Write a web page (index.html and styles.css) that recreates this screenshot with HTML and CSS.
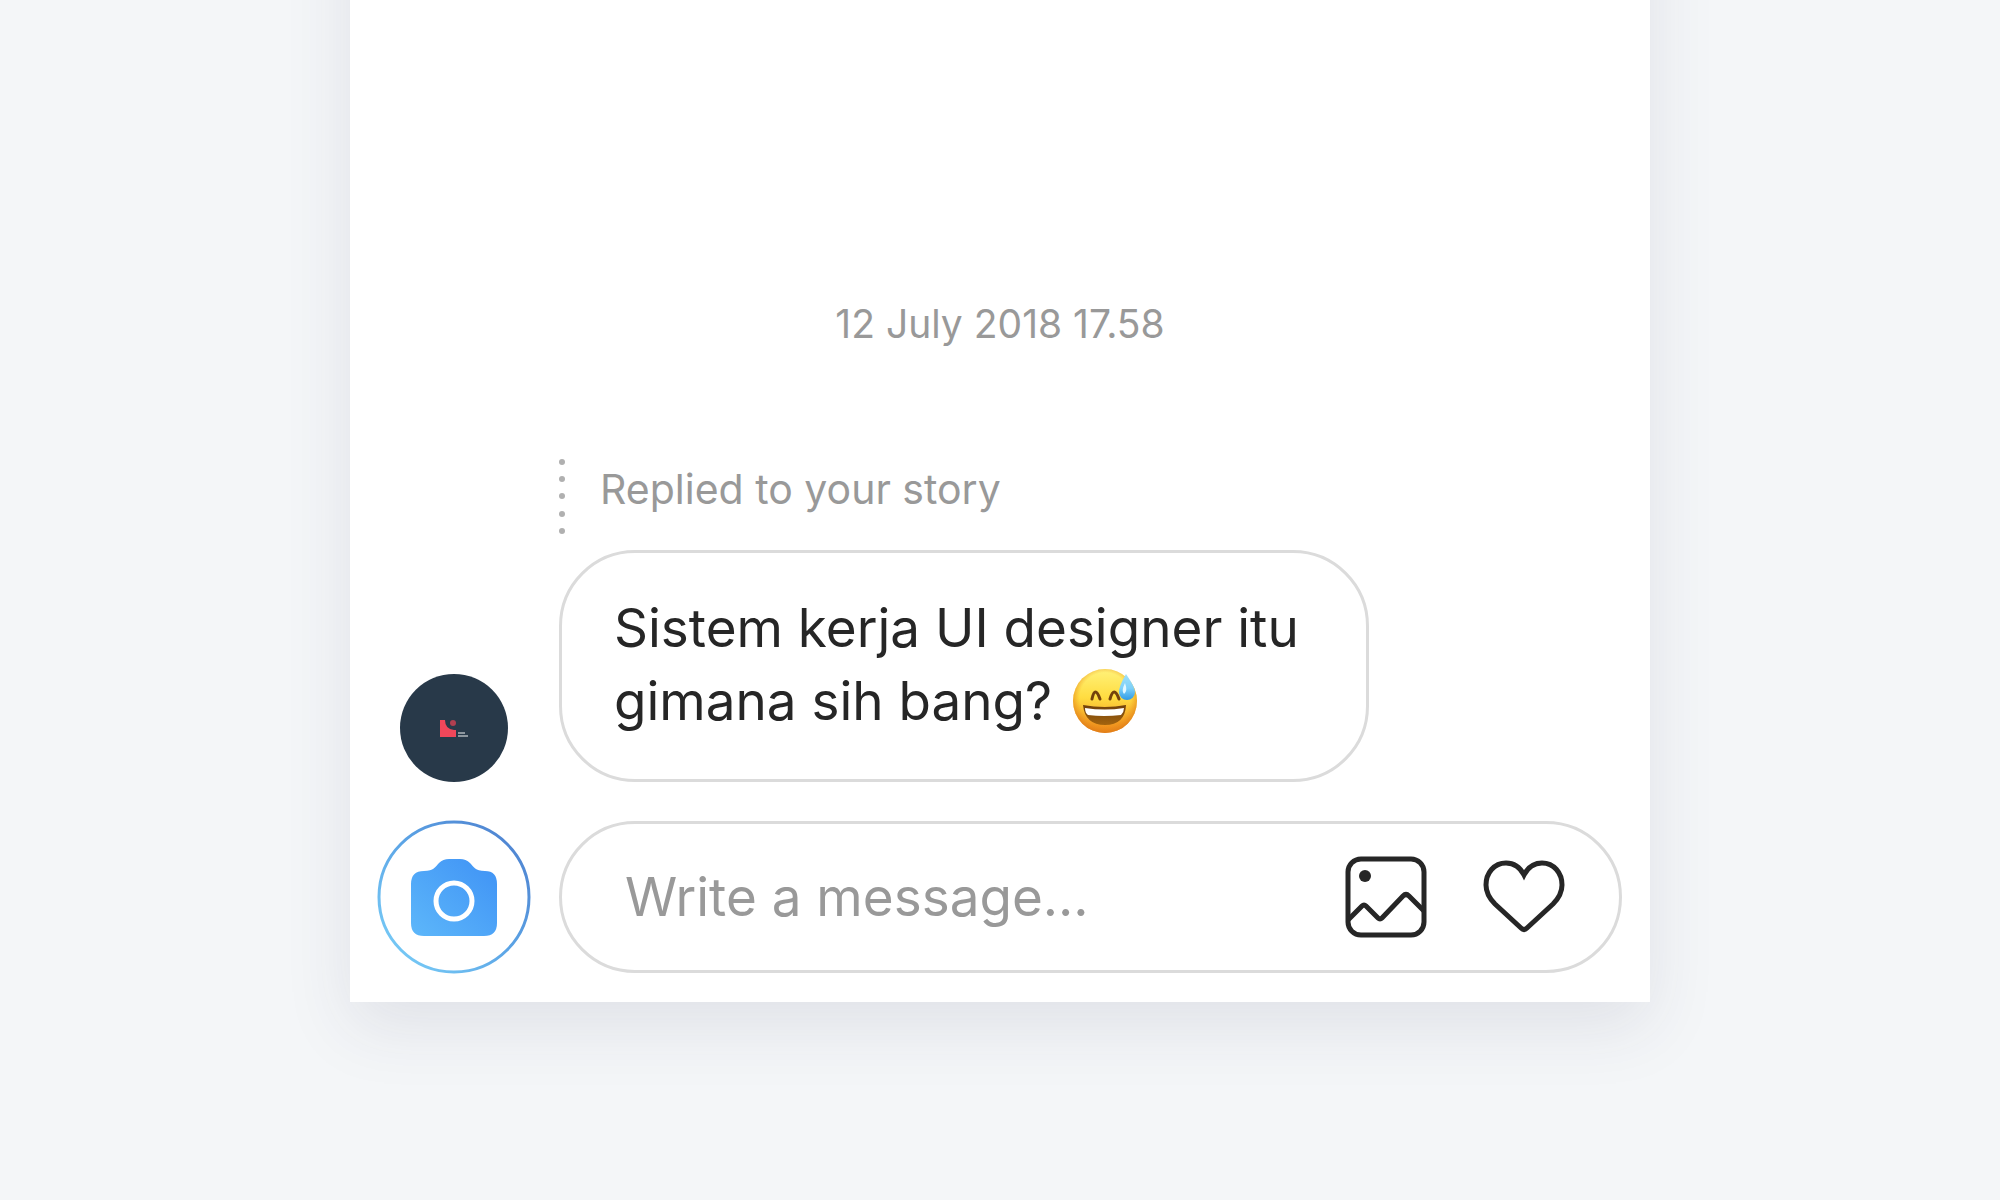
FILE: index.html
```html
<!DOCTYPE html>
<html lang="id">
<head>
<meta charset="utf-8">
<meta name="viewport" content="width=device-width, initial-scale=1">
<title>Direct message</title>
<link rel="stylesheet" href="styles.css">
</head>
<body>
<main class="chat">
  <time class="chat-date" datetime="2018-07-12T17:58">12 July 2018 17.58</time>

  <section class="thread">
    <div class="reply-note">
      <svg class="reply-dots" viewBox="0 0 6 76" aria-hidden="true">
        <circle cx="3" cy="4" r="3"/><circle cx="3" cy="21" r="3"/><circle cx="3" cy="38" r="3"/><circle cx="3" cy="56" r="3"/><circle cx="3" cy="73" r="3"/>
      </svg>
      <span>Replied to your story</span>
    </div>
    <svg class="avatar" viewBox="0 0 108 108" role="img" aria-label="Sender">
      <circle cx="54" cy="54" r="54" fill="#283949"/>
      <path d="M40 46h5q0 9 9 10h2v7H40z" fill="#f0475a"/>
      <circle cx="53" cy="49" r="3" fill="#b03f50"/>
      <path d="M58 59h7M58 62h10" stroke="#8d969e" stroke-width="2"/>
    </svg>
    <p class="bubble">Sistem kerja UI designer itu gimana sih bang? <svg class="emoji" viewBox="0 0 64 64" role="img" aria-label="Grinning face with sweat">
      <defs>
        <linearGradient id="face" x1="0" y1="0" x2="0" y2="1"><stop offset="0" stop-color="#fff27a"/><stop offset=".45" stop-color="#ffdc40"/><stop offset="1" stop-color="#ee8418"/></linearGradient>
        <radialGradient id="rim" cx=".5" cy=".45" r=".56"><stop offset=".7" stop-color="#f0961b" stop-opacity="0"/><stop offset="1" stop-color="#dd7a18" stop-opacity=".9"/></radialGradient>
        <linearGradient id="drop" x1="0" y1="0" x2="0" y2="1"><stop offset="0" stop-color="#9fe0f8"/><stop offset=".55" stop-color="#7dd0f8"/><stop offset="1" stop-color="#2f9ae6"/></linearGradient>
        <linearGradient id="mouth" x1="0" y1="0" x2="0" y2="1"><stop offset="0" stop-color="#70400c"/><stop offset="1" stop-color="#a3640e"/></linearGradient>
      </defs>
      <circle cx="32" cy="32" r="32" fill="url(#face)"/>
      <circle cx="32" cy="32" r="32" fill="url(#rim)"/>
      <path d="M19 30q3-14 8 0M37 30q4-14 9 0" fill="none" stroke="#74420c" stroke-width="3" stroke-linecap="round"/>
      <path d="M10 36q22 4 43 0q-1 20-21 20T10 36z" fill="url(#mouth)"/>
      <path d="M12 39q20 3 39 0q0 4-3 7q-17 2-33 0q-3-2-3-7z" fill="#fff"/>
      <path d="M53 5q9 13 9 18a8 8 0 0 1-16 0q0-6 7-18z" fill="url(#drop)"/>
      <path d="M52 14q-4 8-1 11q4-3 1-11z" fill="#e2f7ff"/>
    </svg></p>
  </section>

  <form class="composer">
    <button class="camera" type="button" aria-label="Open camera">
      <svg viewBox="0 0 152 152" aria-hidden="true">
        <defs>
          <linearGradient id="ring" x1="0" y1="1" x2="1" y2="0"><stop offset="0" stop-color="#7dd3fa"/><stop offset=".5" stop-color="#5ca5e6"/><stop offset="1" stop-color="#4c7ccc"/></linearGradient>
          <linearGradient id="body" x1="0" y1="1" x2="1" y2="0"><stop offset="0" stop-color="#5db7fa"/><stop offset="1" stop-color="#3f92f5"/></linearGradient>
        </defs>
        <circle cx="76" cy="76" r="75" fill="none" stroke="url(#ring)" stroke-width="3"/>
        <path d="M46 50C56 50 57 46 61 42Q65 38 71 38H82Q88 38 92 42C96 46 97 50 107 50Q119 50 119 63V102Q119 115 106 115H46Q33 115 33 102V63Q33 50 46 50z" fill="url(#body)"/>
        <circle cx="76" cy="80" r="18" fill="none" stroke="#fff" stroke-width="5"/>
      </svg>
    </button>
    <div class="field">
      <input class="message" type="text" placeholder="Write a message..." aria-label="Write a message">
      <button class="tool" type="button" aria-label="Send a photo">
        <svg viewBox="0 0 82 82" aria-hidden="true">
          <rect x="3" y="3" width="76" height="76" rx="13"/>
          <path d="M3 64L17 50Q19 48 21 50L33 62Q35 64 37 62L58 40Q61 37 64 40L79 55"/>
          <circle class="solid" cx="20" cy="20" r="6"/>
        </svg>
      </button>
      <button class="tool" type="button" aria-label="Send a like">
        <svg viewBox="0 0 82 82" aria-hidden="true">
          <path d="M41 19C37 11 31 7 23 7C11 7 3 17 3 29C3 37 7 43 12 48L38 72Q41 75 44 72L70 48C75 43 79 37 79 29C79 17 71 7 59 7C51 7 45 11 41 19z"/>
        </svg>
      </button>
    </div>
  </form>
</main>
</body>
</html>
```
FILE: styles.css
```css
* {
  box-sizing: border-box;
}

html {
  background: #f4f6f8;
}

body {
  display: flow-root;
  min-height: 100vh;
  margin: 0;
  color: #262626;
  font-family: Inter, "Liberation Sans", sans-serif;
}

/* The card starts above the window, so its top shadow edge never shows. */
.chat {
  max-width: 1300px;
  margin: -100px auto 0;
  padding: 404px 28px 29px;
  background: #fff;
  box-shadow: 0 24px 64px rgba(50, 50, 93, 0.1);
}

.chat-date {
  display: block;
  color: #999;
  font-size: 39px;
  line-height: 40px;
  text-align: center;
}

.thread,
.composer {
  display: grid;
  grid-template-columns: 152px 1fr;
  column-gap: 29px;
}

.thread {
  margin-top: 114px;
  row-gap: 16px;
}

.reply-note {
  grid-column: 2;
  display: flex;
  align-items: flex-start;
  gap: 35px;
  color: #999;
  font-size: 41px;
  line-height: 62px;
}

.reply-dots {
  width: 6px;
  height: 76px;
  fill: #b0b0b0;
}

.avatar {
  width: 108px;
  height: 108px;
  align-self: end;
  justify-self: center;
}

.bubble {
  max-width: 810px;
  margin: 0;
  padding: 39px 52px 41px;
  border: 3px solid #dbdbdb;
  border-radius: 76px;
  font-size: 53px;
  line-height: 73px;
}

.emoji {
  width: 64px;
  height: 64px;
  margin-left: 6px;
  vertical-align: -13px;
}

.composer {
  margin-top: 39px;
}

button {
  padding: 0;
  border: 0;
  background: none;
}

button svg {
  display: block;
  width: 100%;
  overflow: visible;
}

.camera {
  width: 152px;
  height: 152px;
  border-radius: 50%;
}

.field {
  display: flex;
  align-items: center;
  gap: 56px;
  min-width: 0;
  height: 152px;
  padding: 0 54px 0 63px;
  border: 3px solid #dbdbdb;
  border-radius: 76px;
}

.message {
  flex: 1;
  min-width: 0;
  padding: 0;
  border: 0;
  outline: 0;
  background: none;
  color: #262626;
  font: inherit;
  font-size: 53px;
  line-height: 73px;
}

.message::placeholder {
  color: #999;
  opacity: 1;
}

.tool {
  flex: none;
  width: 82px;
  height: 82px;
}

.tool svg {
  fill: none;
  stroke: #262626;
  stroke-width: 5;
}

.tool .solid {
  fill: #262626;
  stroke: none;
}
```
